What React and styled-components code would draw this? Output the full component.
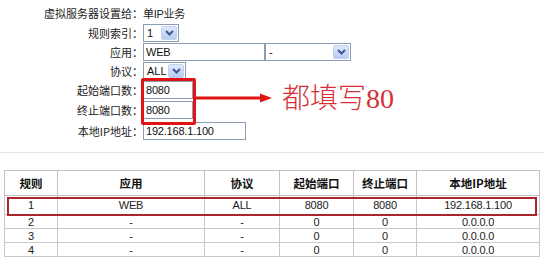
import React from "react";
import styled, { createGlobalStyle } from "styled-components";

const GlobalStyle = createGlobalStyle`
  html, body {
    margin: 0;
    padding: 0;
    background: #ffffff;
  }
  body {
    font-family: "Liberation Sans", "Noto Sans CJK SC", sans-serif;
    color: #111;
  }
`;

const formRows = [
  { label: "虚拟服务器设置给", h: 20, kind: "text", value: "单IP业务" },
  { label: "规则索引", h: 20, kind: "select", value: "1", width: 36 },
  { label: "应用", h: 18, kind: "app" },
  { label: "协议", h: 19, kind: "select", value: "ALL", width: 43 },
  { label: "起始端口数", h: 20, kind: "input", value: "8080", width: 50 },
  { label: "终止端口数", h: 20, kind: "input", value: "8080", width: 50 },
  { label: "本地IP地址", h: 21, kind: "input", value: "192.168.1.100", width: 103 },
];

const rules = [
  { id: "1", app: "WEB", proto: "ALL", start: "8080", end: "8080", ip: "192.168.1.100", hot: true },
  { id: "2", app: "-", proto: "-", start: "0", end: "0", ip: "0.0.0.0" },
  { id: "3", app: "-", proto: "-", start: "0", end: "0", ip: "0.0.0.0" },
  { id: "4", app: "-", proto: "-", start: "0", end: "0", ip: "0.0.0.0" },
];

const Chevron = () => (
  <svg width="9" height="6" viewBox="0 0 9 6">
    <polyline points="1,1 4.5,4.5 8,1" fill="none" stroke="#3d5890" strokeWidth="2" />
  </svg>
);

const Field = ({ row }) => {
  if (row.kind === "text") return <Plain>{row.value}</Plain>;
  if (row.kind === "select")
    return (
      <Select $w={row.width}>
        <span>{row.value}</span>
        <ArrowBtn>
          <Chevron />
        </ArrowBtn>
      </Select>
    );
  if (row.kind === "app")
    return (
      <Pair>
        <TextBox $w={122}>WEB</TextBox>
        <Select $w={86}>
          <span>-</span>
          <ArrowBtn>
            <Chevron />
          </ArrowBtn>
        </Select>
      </Pair>
    );
  return <TextBox $w={row.width}>{row.value}</TextBox>;
};

const App = () => {
  return (
    <Page>
      <GlobalStyle />
      <Form>
        {formRows.map((row) => (
          <FormRow key={row.label} $h={row.h}>
            <Label>{row.label}：</Label>
            <Field row={row} />
          </FormRow>
        ))}
        <HighlightBox />
        <Arrow width="76" height="12" viewBox="0 0 76 12">
          <line x1="0" y1="6" x2="66" y2="6" stroke="#e01414" strokeWidth="3" />
          <polygon points="64,1.5 76,6 64,10.5" fill="#e01414" />
        </Arrow>
        <Note>都填写80</Note>
      </Form>
      <Divider />
      <RuleTable>
        <thead>
          <tr>
            <Th $w={52}>规则</Th>
            <Th $w={146}>应用</Th>
            <Th $w={74}>协议</Th>
            <Th $w={73}>起始端口</Th>
            <Th $w={62}>终止端口</Th>
            <Th>本地IP地址</Th>
          </tr>
        </thead>
        <tbody>
          {rules.map((r) => (
            <Tr key={r.id} $hot={r.hot}>
              <Td>{r.id}</Td>
              <Td>{r.app}</Td>
              <Td>{r.proto}</Td>
              <Td>{r.start}</Td>
              <Td>{r.end}</Td>
              <Td>{r.ip}</Td>
            </Tr>
          ))}
        </tbody>
      </RuleTable>
      <RowMark />
    </Page>
  );
};

const Page = styled.div`
  position: relative;
  width: 544px;
  height: 258px;
  overflow: hidden;
  padding-top: 3px;
  box-sizing: border-box;
`;

const Form = styled.div`
  position: relative;
  display: flex;
  flex-direction: column;
`;

const FormRow = styled.div`
  display: grid;
  grid-template-columns: 143px auto;
  align-items: center;
  height: ${({ $h }) => $h}px;
`;

const Label = styled.div`
  text-align: right;
  font-family: "Noto Sans CJK SC", sans-serif;
  font-size: 11px;
  color: #222;
  margin-right: -8px;
  padding-right: 8px;
  white-space: nowrap;
  overflow: hidden;
`;

const Plain = styled.span`
  font-family: "Liberation Sans", "Noto Sans CJK SC", sans-serif;
  font-size: 11px;
  letter-spacing: -0.3px;
  color: #222;
`;

const Pair = styled.div`
  display: flex;
`;

const TextBox = styled.div`
  width: ${({ $w }) => $w}px;
  height: 18px;
  box-sizing: border-box;
  border: 1px solid #8c9cb4;
  background: #fff;
  font-size: 11px;
  line-height: 16px;
  padding-left: 2px;
  color: #111;
  letter-spacing: -0.2px;
`;

const Select = styled.div`
  width: ${({ $w }) => $w}px;
  height: 18px;
  box-sizing: border-box;
  border: 1px solid #8c9cb4;
  background: #fff;
  display: flex;
  align-items: center;
  justify-content: space-between;
  font-size: 11px;
  padding-left: 3px;
  color: #111;
`;

const ArrowBtn = styled.div`
  width: 16px;
  height: 14px;
  margin-right: 1px;
  border-radius: 2px;
  background: linear-gradient(#dfe8fb, #b9cbf2);
  border: 1px solid #c3d0ec;
  box-sizing: border-box;
  display: flex;
  align-items: center;
  justify-content: center;
`;

const HighlightBox = styled.div`
  position: absolute;
  left: 141px;
  top: 75px;
  width: 55px;
  height: 47px;
  box-sizing: border-box;
  border: 3px solid #e01414;
  border-radius: 2px;
`;

const Arrow = styled.svg`
  position: absolute;
  left: 196px;
  top: 89px;
`;

const Note = styled.div`
  position: absolute;
  left: 282px;
  top: 79px;
  font-family: "Liberation Serif", "Noto Sans CJK SC", serif;
  font-size: 28px;
  font-weight: 300;
  color: #d63036;
  line-height: 34px;
  white-space: nowrap;
`;

const Divider = styled.div`
  height: 1px;
  background: #e4e4e4;
  margin-top: 11px;
`;

const RuleTable = styled.table`
  margin: 17px 0 0 4px;
  width: 536px;
  border-collapse: collapse;
  table-layout: fixed;
  font-size: 11px;
  border: 1px solid #b8b8b8;
`;

const Th = styled.th`
  width: ${({ $w }) => ($w ? `${$w}px` : "auto")};
  height: 24px;
  border: 1px solid #c2c2c2;
  font-family: "Noto Sans CJK SC", sans-serif;
  font-size: 11.5px;
  font-weight: 700;
  color: #111;
  padding: 0;
  text-align: center;
`;

const Tr = styled.tr`
  height: ${({ $hot }) => ($hot ? 19 : 14)}px;
`;

const Td = styled.td`
  border: 1px solid #c8c8c8;
  text-align: center;
  padding: 0;
  line-height: 12px;
  color: #222;
  letter-spacing: -0.2px;
`;

const RowMark = styled.div`
  position: absolute;
  left: 7px;
  top: 197px;
  width: 530px;
  height: 19px;
  box-sizing: border-box;
  border: 2px solid #a8262c;
`;

export default App;
